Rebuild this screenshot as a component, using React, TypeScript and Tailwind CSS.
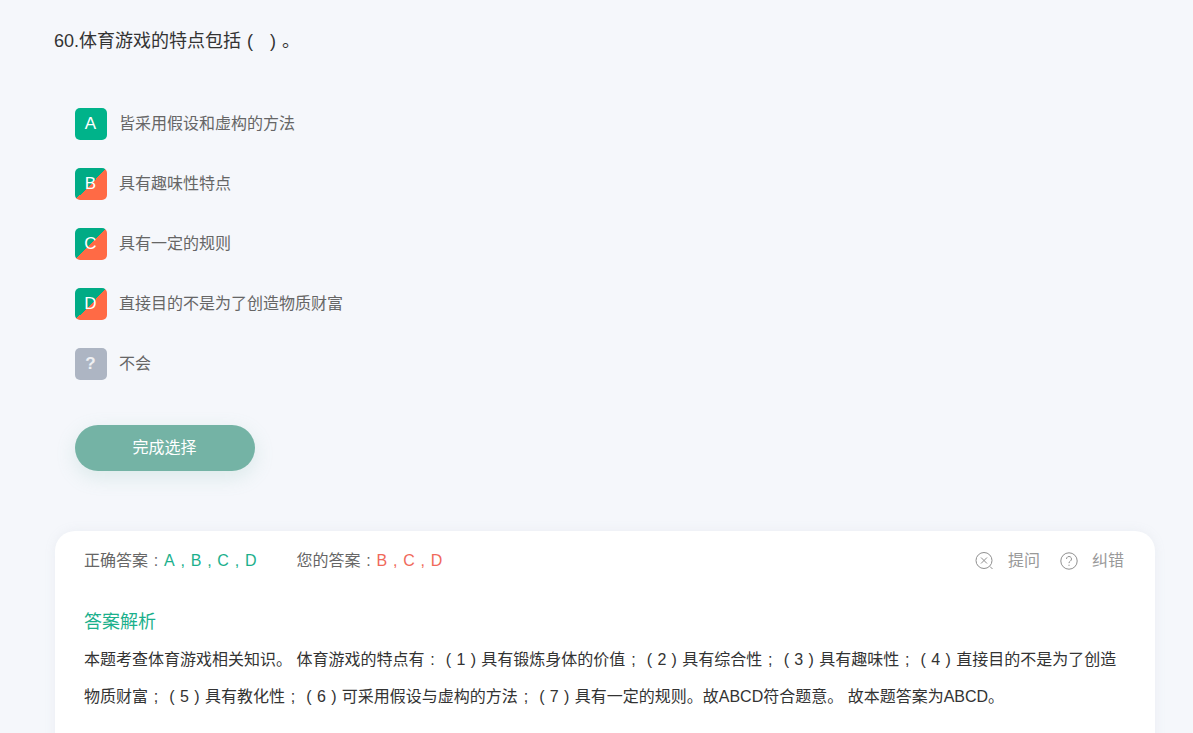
import React from 'react';

const options = [
  { key: 'A', text: '皆采用假设和虚构的方法', split: false },
  { key: 'B', text: '具有趣味性特点', split: true },
  { key: 'C', text: '具有一定的规则', split: true },
  { key: 'D', text: '直接目的不是为了创造物质财富', split: true },
];

// the screenshot's font centres this punctuation in its full-width box
const boxed: Record<string, string> = { '（': '(', '）': ')', '：': ':', '；': ';', '，': ',' };

const Punct = ({ text }: { text: string }) => (
  <>
    {text.split(/([（）：；，])/).map((part, i) =>
      boxed[part] ? (
        <span key={i} className="inline-block w-[1em] text-center">
          {boxed[part]}
        </span>
      ) : (
        part
      )
    )}
  </>
);

const Badge = ({ label, split }: { label: string; split: boolean }) => (
  <span
    className={`flex h-8 w-8 shrink-0 items-center justify-center rounded-[5px] pr-px text-[17px] text-white ${
      split ? 'bg-[linear-gradient(135deg,#00ab85_50%,#ff6a45_50%)]' : 'bg-[#00b38a]'
    }`}
  >
    {label}
  </span>
);

const App: React.FC = () => {
  return (
    <div className="h-[733px] overflow-hidden bg-[#f5f7fb] pr-[38px] pl-[55px] pt-[28px] font-['Liberation_Sans','Noto_Sans_CJK_SC',sans-serif]">
      <h2 className="-ml-px h-[26px] text-[18px] leading-[26px] font-normal text-[#333]">
        <Punct text="60.体育游戏的特点包括（ ）。" />
      </h2>

      <div className="mt-[40px] pl-5">
        {options.map((o) => (
          <div key={o.key} className="flex h-[60px] items-center gap-3">
            <Badge label={o.key} split={o.split} />
            <span className="text-base text-[#666]">{o.text}</span>
          </div>
        ))}
        <div className="flex h-[60px] items-center gap-3">
          <span className="flex h-8 w-8 items-center justify-center rounded-[5px] bg-[#adb5c3] pr-px text-[17px] font-bold text-white/80">?</span>
          <span className="text-base text-[#666]">不会</span>
        </div>

        <button className="mt-[31px] block h-[46px] w-[180px] rounded-[23px] bg-[#74b3a5] pr-px text-base text-white shadow-[0_6px_20px_rgba(116,179,165,0.2)]">
          完成选择
        </button>
      </div>

      <div className="mt-[60px] h-[260px] rounded-t-[20px] bg-white px-[30px] pt-5 shadow-[0_0_12px_rgba(150,160,180,0.1)]">
        <div className="flex h-5 items-center justify-between text-base leading-5">
          <div className="-ml-px flex">
            <span className="text-[#666]">
              <Punct text="正确答案：" />
              <span className="text-[#1bb08c]">
                <Punct text="A，B，C，D" />
              </span>
            </span>
            <span className="ml-10 text-[#666]">
              <Punct text="您的答案：" />
              <span className="text-[#f0695a]">
                <Punct text="B，C，D" />
              </span>
            </span>
          </div>
          <div className="flex items-center pr-px text-[#999]">
            <svg width="20" height="20" viewBox="0 0 20 20" fill="none" stroke="#8f8f8f" strokeWidth="1">
              <circle cx="9" cy="9.5" r="8" />
              <path d="M6 6.5l6 6M12 6.5l-6 6M15 15.5l2.5 2.5" />
            </svg>
            <span className="ml-[13px]">提问</span>
            <svg className="ml-5" width="18" height="18" viewBox="0 0 18 18" fill="none" stroke="#8f8f8f" strokeWidth="1">
              <circle cx="9" cy="9" r="8.2" />
              <path d="M6.5 7a2.5 2.5 0 1 1 3.8 2.1c-.9.6-1.3 1-1.3 2" />
              <path d="M9 12.7v1.2" />
            </svg>
            <span className="ml-[14px]">纠错</span>
          </div>
        </div>

        <h3 className="mt-[38px] -ml-px text-lg leading-[26px] font-normal text-[#1bb08c]">答案解析</h3>
        <p className="mt-[6px] -ml-px text-base leading-[37px] text-[#333]">
          <Punct text="本题考查体育游戏相关知识。 体育游戏的特点有：（1）具有锻炼身体的价值；（2）具有综合性；（3）具有趣味性；（4）直接目的不是为了创造" />
          <br />
          <Punct text="物质财富；（5）具有教化性；（6）可采用假设与虚构的方法；（7）具有一定的规则。故ABCD符合题意。 故本题答案为ABCD。" />
        </p>
      </div>
    </div>
  );
};

export default App;
